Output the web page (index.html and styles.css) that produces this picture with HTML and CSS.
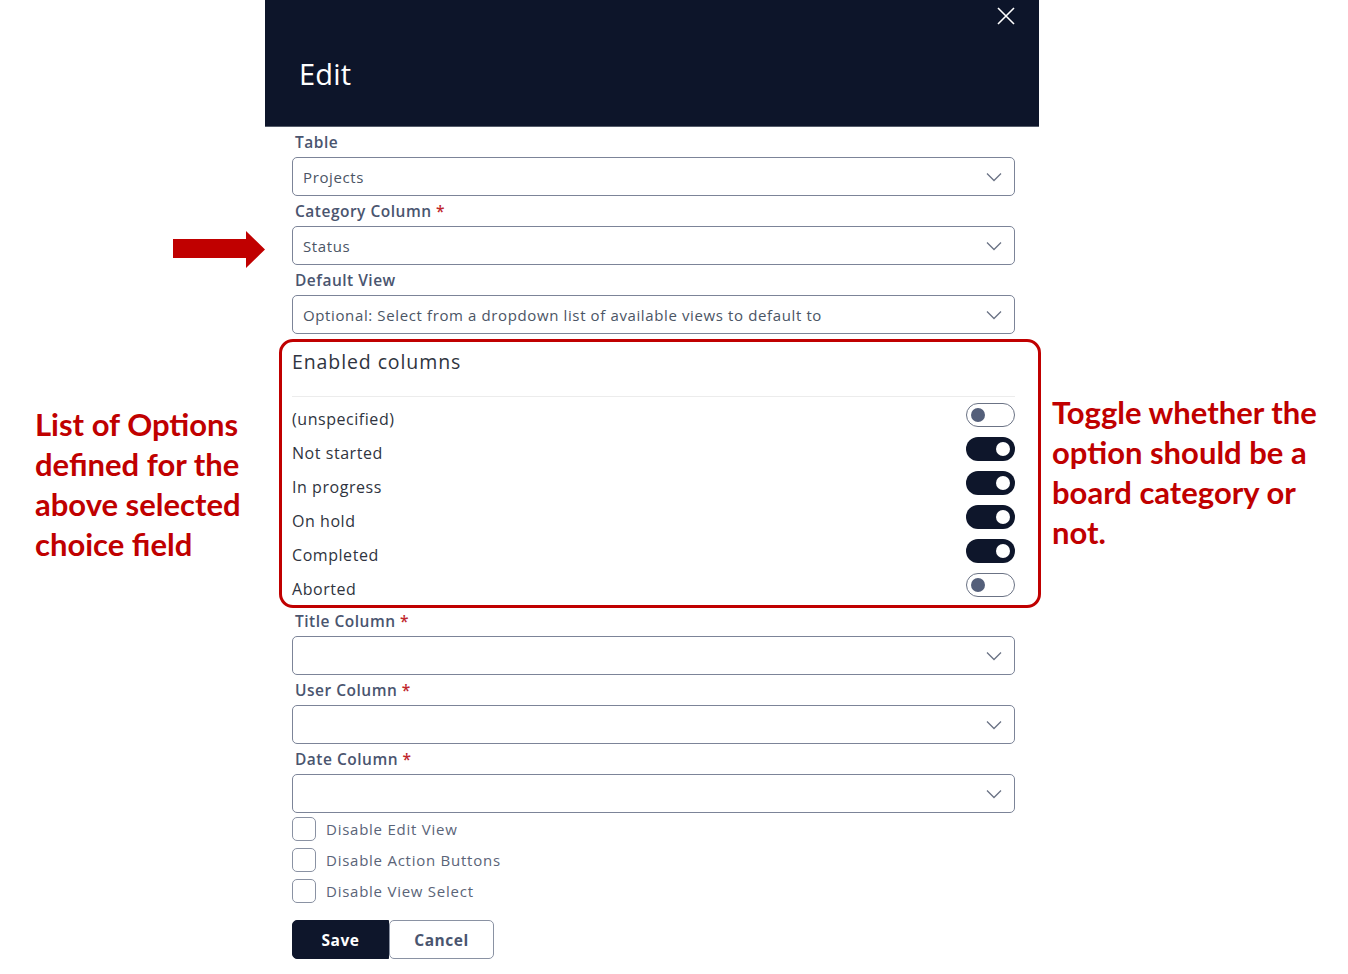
FILE: index.html
```html
<!DOCTYPE html>
<html>
<head>
<meta charset="utf-8">
<link rel="stylesheet" href="styles.css">
</head>
<body>
<div class="page">
  <div class="modal">
    <div class="header">
      <h1 class="title">Edit</h1>
      <svg class="close" width="18" height="18" viewBox="0 0 18 18"><path d="M1 1L17 17M17 1L1 17" stroke="#fff" stroke-width="1.6" fill="none"/></svg>
    </div>
    <div class="body">
      <div class="label">Table</div>
      <div class="select"><span>Projects</span><svg class="chev" width="16" height="10" viewBox="0 0 16 10"><path d="M1 1.5L8 8.5L15 1.5" stroke="#6b7385" stroke-width="1.3" fill="none"/></svg></div>
      <div class="label">Category Column <span class="req">*</span></div>
      <div class="select"><span>Status</span><svg class="chev" width="16" height="10" viewBox="0 0 16 10"><path d="M1 1.5L8 8.5L15 1.5" stroke="#6b7385" stroke-width="1.3" fill="none"/></svg></div>
      <div class="label">Default View</div>
      <div class="select"><span>Optional: Select from a dropdown list of available views to default to</span><svg class="chev" width="16" height="10" viewBox="0 0 16 10"><path d="M1 1.5L8 8.5L15 1.5" stroke="#6b7385" stroke-width="1.3" fill="none"/></svg></div>

      <div class="enabled">
        <div class="enabled-title">Enabled columns</div>
        <div class="sep"></div>
        <div class="row"><span class="row-text">(unspecified)</span><span class="toggle off"><span class="knob"></span></span></div>
        <div class="row"><span class="row-text">Not started</span><span class="toggle on"><span class="knob"></span></span></div>
        <div class="row"><span class="row-text">In progress</span><span class="toggle on"><span class="knob"></span></span></div>
        <div class="row"><span class="row-text">On hold</span><span class="toggle on"><span class="knob"></span></span></div>
        <div class="row"><span class="row-text">Completed</span><span class="toggle on"><span class="knob"></span></span></div>
        <div class="row"><span class="row-text">Aborted</span><span class="toggle off"><span class="knob"></span></span></div>
      </div>

      <div class="label">Title Column <span class="req">*</span></div>
      <div class="select"><span></span><svg class="chev" width="16" height="10" viewBox="0 0 16 10"><path d="M1 1.5L8 8.5L15 1.5" stroke="#6b7385" stroke-width="1.3" fill="none"/></svg></div>
      <div class="label">User Column <span class="req">*</span></div>
      <div class="select"><span></span><svg class="chev" width="16" height="10" viewBox="0 0 16 10"><path d="M1 1.5L8 8.5L15 1.5" stroke="#6b7385" stroke-width="1.3" fill="none"/></svg></div>
      <div class="label">Date Column <span class="req">*</span></div>
      <div class="select"><span></span><svg class="chev" width="16" height="10" viewBox="0 0 16 10"><path d="M1 1.5L8 8.5L15 1.5" stroke="#6b7385" stroke-width="1.3" fill="none"/></svg></div>

      <div class="check"><span class="box"></span><span>Disable Edit View</span></div>
      <div class="check"><span class="box"></span><span>Disable Action Buttons</span></div>
      <div class="check"><span class="box"></span><span>Disable View Select</span></div>

      <div class="buttons">
        <button class="btn save">Save</button>
        <button class="btn cancel">Cancel</button>
      </div>
    </div>
  </div>

  <svg class="arrow" width="93" height="37" viewBox="0 0 93 37"><path d="M0 8H73V0L92 18.5L73 37V27H0Z" fill="#c00000"/></svg>
  <div class="note note-left">List of Options<br>defined for the<br>above selected<br>choice field</div>
  <div class="note note-right">Toggle whether the<br>option should be a<br>board category or<br>not.</div>
</div>
</body>
</html>
```

FILE: styles.css
```css
* { box-sizing: border-box; }
html, body { margin: 0; padding: 0; background: #fff; }
body { font-family: "Open Sans", "Noto Sans", sans-serif; }
.page { position: relative; width: 1348px; height: 974px; }
.modal { position: absolute; left: 265px; top: 0; width: 774px; }
.header {
  position: relative;
  height: 127px;
  background: #0d152a;
  border-bottom: 1px solid #555c6a;
  padding: 20px 34px 0;
  display: flex;
  align-items: center;
}
.title { margin: 0; color: #fff; font-weight: 400; font-size: 29px; font-family: "Open Sans", sans-serif; line-height: 1; letter-spacing: 0.2px; }
.close { position: absolute; right: 24px; top: 7px; }
.body { padding: 0 24px 0 27px; }
.label {
  height: 30px; line-height: 30px;
  padding-left: 3px;
  font-size: 15.5px; font-weight: 600; color: #4a556f; letter-spacing: 0.5px;
}
.req { color: #c0272d; }
.select {
  height: 39px;
  border: 1px solid #7c8498;
  border-radius: 5px;
  display: flex; align-items: center; justify-content: space-between;
  padding: 0 12px 0 10px;
  font-size: 15px; color: #4b5565; letter-spacing: 0.62px;
}
.chev { display: block; }
.enabled {
  margin: 5px -26px -2px -13px;
  border: 3px solid #c00000;
  border-radius: 14px;
  padding: 4px 23px 3px 10px;
}
.enabled-title { font-size: 19.5px; color: #2f3440; line-height: 26px; padding-top: 3px; letter-spacing: 0.9px; }
.sep { height: 1px; background: #ececec; margin-top: 21px; margin-bottom: 1px; }
.row { height: 34px; display: flex; align-items: center; justify-content: space-between; }
.row-text { font-size: 16px; color: #2f3440; padding-top: 7px; letter-spacing: 0.55px; }
.toggle {
  position: relative; width: 49px; height: 24px; border-radius: 12px;
  display: block;
}
.toggle.off { border: 1px solid #6b7385; background: #fff; }
.toggle.on { background: #0e162b; }
.knob { position: absolute; top: 50%; width: 14px; height: 14px; border-radius: 50%; transform: translateY(-50%); }
.toggle.off .knob { left: 4px; background: #545f7a; }
.toggle.on .knob { right: 5px; background: #fff; }
.check { height: 31px; display: flex; align-items: center; font-size: 15px; color: #5a6478; letter-spacing: 0.75px; }
.box { width: 24px; height: 24px; border: 1px solid #8a92a3; border-radius: 5px; margin-right: 10px; display: block; }
.buttons { display: flex; margin-top: 14px; }
.btn { height: 39px; font-family: "Open Sans", sans-serif; font-size: 15.5px; font-weight: 700; border-radius: 5px; cursor: pointer; letter-spacing: 0.5px; }
.save { width: 97px; background: #0e162b; color: #fff; border: 1px solid #0e162b; border-radius: 5px 0 0 5px; }
.cancel { width: 105px; background: #fff; color: #4a556f; border: 1px solid #8a92a3; }
.arrow { position: absolute; left: 173px; top: 231px; }
.note { position: absolute; font-family: "Lato", sans-serif; font-weight: 700; color: #c00000; font-size: 31px; line-height: 40px; }
.note-left { left: 35px; top: 404px; }
.note-right { left: 1052px; top: 392px; }
```
